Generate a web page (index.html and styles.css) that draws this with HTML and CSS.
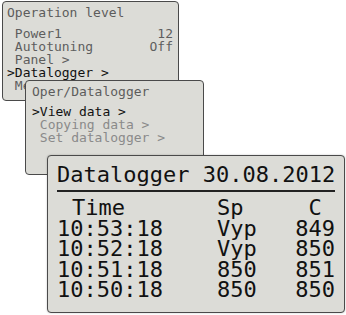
FILE: index.html
```html
<!DOCTYPE html>
<html lang="en">
<head>
    <meta charset="UTF-8">
    <title>Datalogger menu</title>
    <link rel="stylesheet" href="styles.css">
</head>
<body>
    <div class="screen">
        <!-- Level 1 -->
        <div class="window win-oper">
            <div class="win-title">Operation level</div>
            <div class="menu">
                <div class="row"><span> Power1</span><span>12</span></div>
                <div class="row"><span> Autotuning</span><span>Off</span></div>
                <div class="row"><span> Panel &gt;</span></div>
                <div class="row active"><span>&gt;Datalogger &gt;</span></div>
                <div class="row"><span> Memory &gt;</span></div>
            </div>
        </div>

        <!-- Level 2 -->
        <div class="window win-sub">
            <div class="win-title">Oper/Datalogger</div>
            <div class="menu">
                <div class="row active"><span>&gt;View data &gt;</span></div>
                <div class="row dim"><span> Copying data &gt;</span></div>
                <div class="row dim"><span> Set datalogger &gt;</span></div>
            </div>
        </div>

        <!-- Data view -->
        <div class="window win-data">
            <div class="data-head">Datalogger 30.08.2012</div>
            <div class="data-table">
                <div class="col-time th">Time</div><div>Sp</div><div class="col-c th">C</div>
                <div>10:53:18</div><div>Vyp</div><div class="col-c">849</div>
                <div>10:52:18</div><div>Vyp</div><div class="col-c">850</div>
                <div>10:51:18</div><div>850</div><div class="col-c">851</div>
                <div>10:50:18</div><div>850</div><div class="col-c">850</div>
            </div>
        </div>
    </div>
</body>
</html>
```

FILE: styles.css
```css
body {
    margin: 0;
    background-color: #ffffff;
    font-family: "DejaVu Sans Mono", "Liberation Mono", monospace;
}
.screen {
    position: relative;
    width: 346px;
    height: 315px;
    overflow: hidden;
}
.window {
    position: absolute;
    box-sizing: border-box;
    background-color: #dcdcd7;
    border: 1px solid #4a4a4a;
    border-radius: 4px;
}
.win-oper { left: 2px; top: 1px; width: 177px; height: 100px; padding: 4px 5px 0 4px; }
.win-sub { left: 25px; top: 80px; width: 179px; height: 95px; padding: 4px 5px 0 6px; }
.win-data {
    left: 47px;
    top: 155px;
    width: 298px;
    height: 158px;
    padding: 8px 9px 0 9px;
    box-shadow: 0 0 2px rgba(0, 0, 0, 0.25);
    color: #111;
}

.win-title { font-size: 13px; line-height: 13px; color: #5c5c5c; margin-bottom: 8px; }
.win-sub .win-title { margin-bottom: 7px; }
.menu { font-size: 13px; line-height: 13px; color: #5e5e5e; }
.row { display: flex; justify-content: space-between; white-space: pre; }
.row.active { color: #111; }
.row.dim { color: #8a8a8a; }

.data-head {
    font-size: 22px;
    line-height: 22px;
    white-space: nowrap;
    padding-bottom: 4px;
    border-bottom: 2px solid #222;
}
.data-table {
    display: grid;
    grid-template-columns: 160px 1fr auto;
    font-size: 22px;
    line-height: 20.5px;
    margin-top: 6px;
}
.col-time.th { padding-left: 15px; }
.col-c { text-align: right; }
.col-c.th { text-align: center; }
```
